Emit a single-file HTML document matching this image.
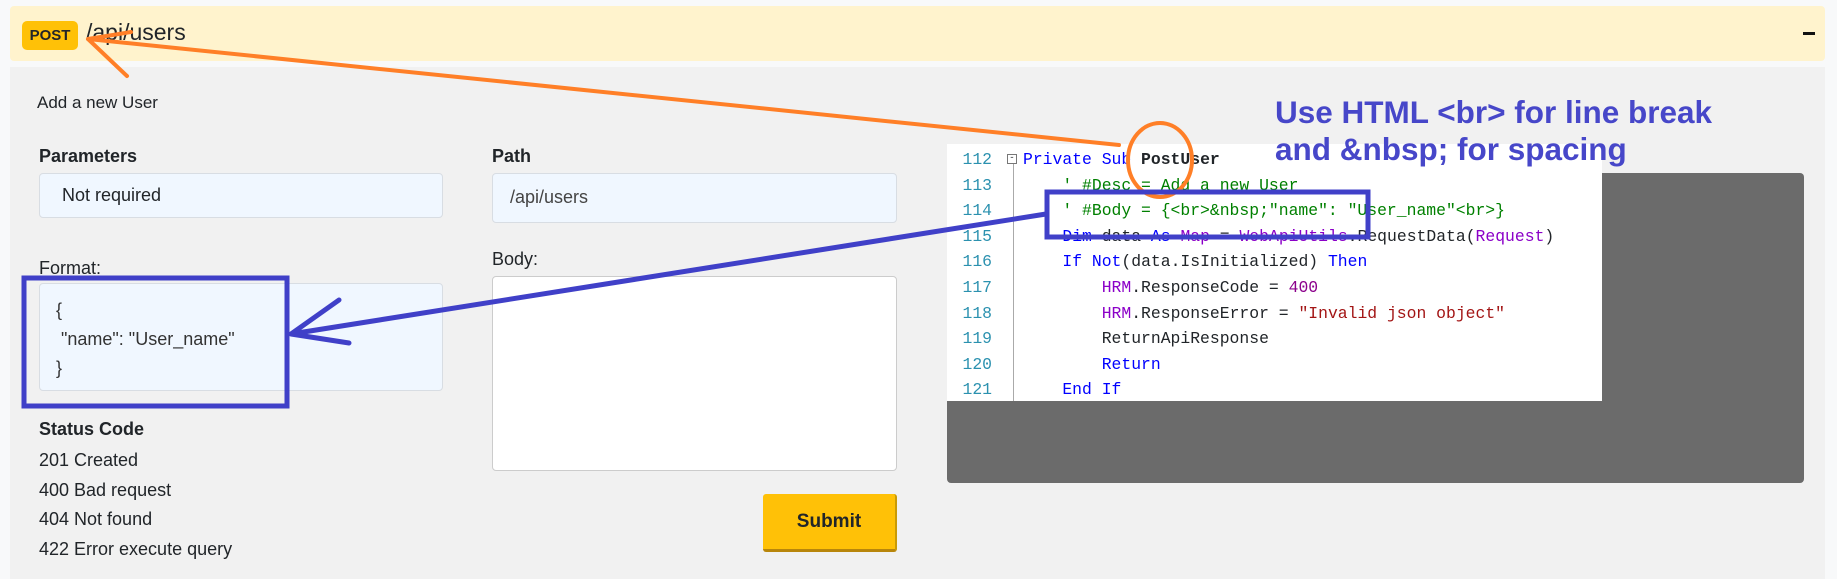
<!DOCTYPE html>
<html><head><meta charset="utf-8"><style>
*{margin:0;padding:0;box-sizing:border-box}
body{width:1837px;height:579px;background:#f8f9fa;position:relative;overflow:hidden;font-family:"Liberation Sans",sans-serif;color:#212529}
.a{position:absolute}
.hdr{left:10px;top:6px;width:1815px;height:55px;background:#fff3cd;border-radius:4px}
.panel{left:10px;top:67px;width:1815px;height:512px;background:#f1f1f1}
.badge{left:22px;top:21px;width:56px;height:29px;background:#ffc107;border-radius:5px;font-weight:bold;font-size:15px;line-height:29px;text-align:center}
.box{background:#f0f7ff;border:1px solid #d8dde3;border-radius:4px}
.t{font-size:18px;line-height:22px}
.b{font-weight:bold}
.code{left:947px;top:144px;width:655px;height:257px;background:#fff;font-family:"Liberation Mono",monospace;font-size:16.4px}
.ln{position:absolute;left:13px;width:32px;text-align:right;color:#2b91af}
.cl{position:absolute;left:76px;white-space:pre}
.k{color:#0000ff}.c{color:#008000}.p{color:#8b00c8}.s{color:#a31515}.n{color:#8b008b}
</style></head><body>
<div class="a hdr"></div>
<div class="a badge">POST</div>
<div class="a" style="left:86px;top:19px;font-size:23px">/api/users</div>
<div class="a" style="left:1803px;top:32px;width:12px;height:3px;background:#111"></div>
<div class="a panel"></div>
<div class="a t" style="left:37px;top:92px;font-size:17px">Add a new User</div>
<div class="a t b" style="left:39px;top:145px">Parameters</div>
<div class="a box" style="left:39px;top:173px;width:404px;height:45px"></div>
<div class="a t" style="left:62px;top:184px">Not required</div>
<div class="a t b" style="left:492px;top:145px">Path</div>
<div class="a box" style="left:492px;top:173px;width:405px;height:50px"></div>
<div class="a t" style="left:510px;top:186px;color:#444">/api/users</div>
<div class="a t" style="left:39px;top:257px">Format:</div>
<div class="a box" style="left:39px;top:283px;width:404px;height:108px"></div>
<div class="a t" style="left:56px;top:296px;line-height:29px;color:#333">{<br>&nbsp;"name": "User_name"<br>}</div>
<div class="a t" style="left:492px;top:248px">Body:</div>
<div class="a" style="left:492px;top:276px;width:405px;height:195px;background:#fff;border:1px solid #ccc;border-radius:4px"></div>
<div class="a t b" style="left:39px;top:418px">Status Code</div>
<div class="a t" style="left:39px;top:446px;line-height:29.5px">201 Created<br>400 Bad request<br>404 Not found<br>422 Error execute query</div>
<div class="a" style="left:763px;top:494px;width:134px;height:58px;background:#ffc107;border-radius:3px;border-bottom:3px solid #b8860b;border-right:2px solid #c99a06;font-weight:bold;font-size:19px;line-height:56px;text-align:center">Submit</div>
<div class="a" style="left:947px;top:173px;width:857px;height:310px;background:#6b6b6b;border-radius:4px"></div>
<div class="a code">
<div style="position:absolute;left:66px;top:13px;width:1px;height:244px;background:#aaa"></div>
<div style="position:absolute;left:60px;top:10px;width:10px;height:10px;border:1px solid #777;background:#fff;font-size:9px;line-height:7px;text-align:center">-</div>
<div class="ln" style="top:6px">112</div><div class="cl" style="top:6px"><span class="k">Private Sub</span> <b>PostUser</b></div>
<div class="ln" style="top:32px">113</div><div class="cl c" style="top:32px">    ' #Desc = Add a new User</div>
<div class="ln" style="top:57px">114</div><div class="cl c" style="top:57px">    ' #Body = {&lt;br&gt;&amp;nbsp;"name": "User_name"&lt;br&gt;}</div>
<div class="ln" style="top:83px">115</div><div class="cl" style="top:83px">    <span class="k">Dim</span> data <span class="k">As</span> <span class="p">Map</span> = <span class="p">WebApiUtils</span>.RequestData(<span class="p">Request</span>)</div>
<div class="ln" style="top:108px">116</div><div class="cl" style="top:108px">    <span class="k">If Not</span>(data.IsInitialized) <span class="k">Then</span></div>
<div class="ln" style="top:134px">117</div><div class="cl" style="top:134px">        <span class="p">HRM</span>.ResponseCode = <span class="n">400</span></div>
<div class="ln" style="top:160px">118</div><div class="cl" style="top:160px">        <span class="p">HRM</span>.ResponseError = <span class="s">"Invalid json object"</span></div>
<div class="ln" style="top:185px">119</div><div class="cl" style="top:185px">        ReturnApiResponse</div>
<div class="ln" style="top:211px">120</div><div class="cl k" style="top:211px">        Return</div>
<div class="ln" style="top:236px">121</div><div class="cl k" style="top:236px">    End If</div>
</div>
<div class="a b" style="left:1275px;top:94px;font-size:31.5px;line-height:37px;color:#4747c9">Use HTML &lt;br&gt; for line break<br>and &amp;nbsp; for spacing</div>
<svg class="a" style="left:0;top:0" width="1837" height="579">
<g fill="none" stroke-linecap="round">
<path d="M1119 145 L88 39 M88 39 L131 32 M88 39 L127 76" stroke="#ff7f27" stroke-width="4"/>
<ellipse cx="1160" cy="160" rx="32" ry="37" stroke="#ff7f27" stroke-width="4"/>
<rect x="1047" y="192" width="321" height="45" stroke="#4040c8" stroke-width="5"/>
<rect x="24" y="278" width="263" height="128" stroke="#4040c8" stroke-width="5"/>
<path d="M1046 214 L291 334 M291 334 L339 300 M291 334 L349 343" stroke="#4040c8" stroke-width="5"/>
</g></svg>
</body></html>
